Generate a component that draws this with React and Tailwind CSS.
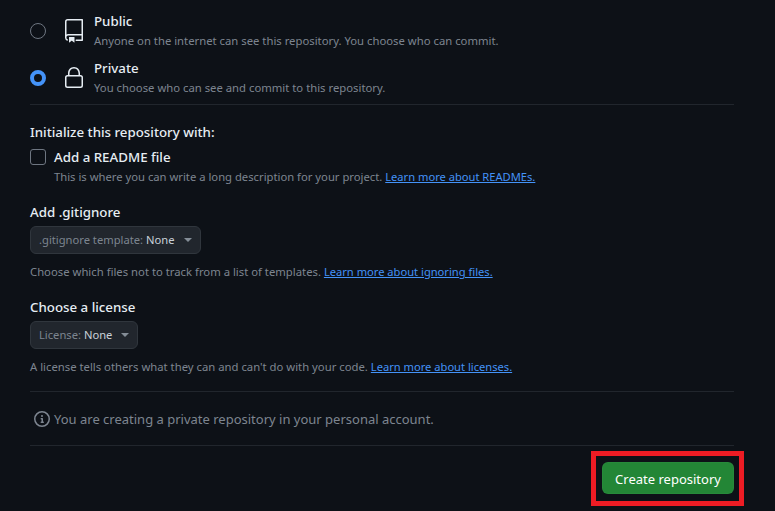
import React from "react";

const RepoIcon = () => (
  <svg width="24" height="24" viewBox="0 0 24 24" fill="#e6edf3" className="shrink-0">
    <path d="M3 2.75A2.75 2.75 0 0 1 5.75 0h14.5a.75.75 0 0 1 .75.75v20.5a.75.75 0 0 1-.75.75h-6a.75.75 0 0 1 0-1.5h5.25v-4H6A1.5 1.5 0 0 0 4.5 18v.75c0 .716.43 1.334 1.05 1.605a.75.75 0 0 1-.6 1.374A3.251 3.251 0 0 1 3 18.75ZM19.5 1.5H5.75c-.69 0-1.25.56-1.25 1.25v12.651A2.989 2.989 0 0 1 6 15h13.5Z" />
    <path d="M7 18.25a.25.25 0 0 1 .25-.25h5a.25.25 0 0 1 .25.25v5.01a.25.25 0 0 1-.397.201l-2.206-1.604a.25.25 0 0 0-.294 0L7.397 23.46a.25.25 0 0 1-.397-.2Z" />
  </svg>
);

const LockIcon = () => (
  <svg width="24" height="24" viewBox="0 0 24 24" fill="#e6edf3" className="shrink-0">
    <path d="M6 9V7.25C6 3.845 8.503 1 12 1s6 2.845 6 6.25V9h.5a2.5 2.5 0 0 1 2.5 2.5v8a2.5 2.5 0 0 1-2.5 2.5h-13A2.5 2.5 0 0 1 3 19.5v-8A2.5 2.5 0 0 1 5.5 9Zm-1.5 2.5v8a1 1 0 0 0 1 1h13a1 1 0 0 0 1-1v-8a1 1 0 0 0-1-1h-13a1 1 0 0 0-1 1Zm3-4.25V9h9V7.25c0-2.67-1.922-4.75-4.5-4.75-2.578 0-4.5 2.08-4.5 4.75Z" />
  </svg>
);

const InfoIcon = () => (
  <svg width="16" height="16" viewBox="0 0 16 16" fill="#7d8590" className="shrink-0">
    <path d="M0 8a8 8 0 1 1 16 0A8 8 0 0 1 0 8Zm8-6.5a6.5 6.5 0 1 0 0 13 6.5 6.5 0 0 0 0-13ZM6.5 7.75A.75.75 0 0 1 7.25 7h1a.75.75 0 0 1 .75.75v2.75h.25a.75.75 0 0 1 0 1.5h-2a.75.75 0 0 1 0-1.5h.25v-2h-.25a.75.75 0 0 1-.75-.75ZM8 6a1 1 0 1 1 0-2 1 1 0 0 1 0 2Z" />
  </svg>
);

const Caret = () => <span className="ml-[9px] w-0 h-0 border-x-[4px] border-x-transparent border-t-[4px] border-t-[#848d97]" />;

const Link = ({ children }) => <a className="text-[11.15px] text-[#4493f8] underline">{children}</a>;

const Visibility = ({ checked, icon, title, desc }) => (
  <div className="flex h-[47px] items-center">
    {checked ? (
      <span className="w-4 h-4 rounded-full border-[4px] border-[#4493f8] bg-[#0d1117] shrink-0" />
    ) : (
      <span className="w-4 h-4 rounded-full border border-[#6e7681] shrink-0" />
    )}
    <div className="ml-4">{icon}</div>
    <div className="ml-2">
      <div className="text-[13.3px] leading-[20px] font-medium text-[#e6edf3] -mt-[1px]">{title}</div>
      <div className="text-[11.3px] leading-[18px] text-[#7d8590] mt-px">{desc}</div>
    </div>
  </div>
);

const Dropdown = ({ label }) => (
  <div className="inline-flex items-center h-[28px] pl-2 pr-2 rounded-md bg-[#21262d] border border-[#30363d] text-[11.2px]">
    <span className="text-[#7d8590] pt-px">{label}:&nbsp;</span>
    <span className="text-[#c9d1d9] pt-px">None</span>
    <Caret />
  </div>
);

export default function App() {
  return (
    <div className="h-[511px] overflow-hidden bg-[#0d1117] pl-[30px] pr-[41px] font-['Noto_Sans',sans-serif]">
      <div className="pt-[7px] pb-[3px]">
        <Visibility
          icon={<RepoIcon />}
          title="Public"
          desc="Anyone on the internet can see this repository. You choose who can commit."
        />
        <Visibility
          checked
          icon={<LockIcon />}
          title="Private"
          desc="You choose who can see and commit to this repository."
        />
      </div>
      <div className="border-t border-[#21262d] pt-[17px]">
        <div className="text-[13.3px] leading-[20px] font-medium text-[#e6edf3]">Initialize this repository with:</div>
        <div className="flex items-center mt-[5px] h-[20px]">
          <span className="w-4 h-4 rounded-[3px] border border-[#6e7681] shrink-0" />
          <span className="ml-2 text-[13.3px] leading-[20px] font-medium text-[#e6edf3]">Add a README file</span>
        </div>
        <div className="ml-6 mt-[1px] text-[11.25px] leading-[18px] text-[#7d8590]">
          This is where you can write a long description for your project. <Link>Learn more about READMEs.</Link>
        </div>

        <div className="mt-[16px] text-[13.3px] leading-[20px] font-medium text-[#e6edf3]">Add .gitignore</div>
        <div className="mt-[4px] flex"><Dropdown label=".gitignore template" /></div>
        <div className="mt-[9px] text-[11.3px] leading-[18px] text-[#7d8590]">
          Choose which files not to track from a list of templates. <Link>Learn more about ignoring files.</Link>
        </div>

        <div className="mt-[16px] text-[13.3px] leading-[20px] font-medium text-[#e6edf3]">Choose a license</div>
        <div className="mt-[4px] flex"><Dropdown label="License" /></div>
        <div className="mt-[9px] text-[11.3px] leading-[18px] text-[#7d8590]">
          A license tells others what they can and can't do with your code. <Link>Learn more about licenses.</Link>
        </div>
      </div>
      <div className="mt-[15px] border-t border-[#21262d] h-[54px] flex items-center pl-1 text-[13px] text-[#7d8590]">
        <InfoIcon />
        <span className="ml-1 pt-[2px]">You are creating a private repository in your personal account.</span>
      </div>
      <div className="border-t border-[#21262d] pt-4 flex justify-end">
        <div className="relative">
          <button type="button" className="w-[132px] h-[32px] pt-[3px] rounded-md bg-[#238636] border border-[#2c9140]/40 text-[13px] text-white">
            Create repository
          </button>
          {/* red annotation box around the button */}
          <div className="absolute -left-[11px] -right-[10px] -top-[11px] -bottom-[12px] border-[5px] border-[#ed1c24]" />
        </div>
      </div>
    </div>
  );
}
